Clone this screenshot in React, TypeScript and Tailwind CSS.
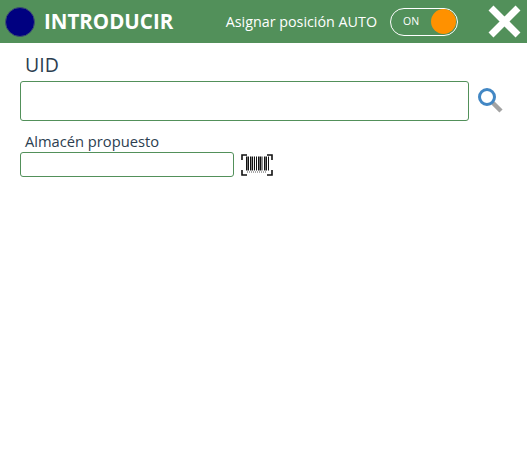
import { useState } from 'react';

const font = "font-['Open_Sans','Noto_Sans',sans-serif]";

const SearchIcon = () => (
    <svg width="28" height="28" viewBox="0 0 28 28" fill="none">
        <path d="M15.5 15.5L24 24" stroke="#a3a3a3" strokeWidth="4.5" />
        <circle cx="10" cy="10" r="7.5" stroke="#4287c4" strokeWidth="3" fill="#fff" />
    </svg>
);

const bars = [3, 5, 7, 8.5, 11, 13, 15, 17, 18.5, 21, 23, 25];

const BarcodeIcon = () => (
    <svg width="32" height="24" viewBox="0 0 32 24" fill="none">
        <path d="M1 7V2H6M26 2H31V7M1 17V22H6M26 22H31V17" stroke="#111" strokeWidth="1.6" />
        {bars.map((x, i) => (
            <rect key={x} x={x + 2} y="3.5" width={i % 3 === 0 ? 1.6 : 1} height="14" fill="#111" />
        ))}
        <path d="M6 19H26" stroke="#555" strokeWidth="1" strokeDasharray="1 1" />
    </svg>
);

export default function App() {
    const [auto, setAuto] = useState(true);

    return (
        <div className={`h-[457px] w-[527px] overflow-hidden bg-white ${font}`}>
            <header className="flex h-[43px] items-center bg-[#52905a] pl-[5px] pr-[6px] text-white">
                <div className="h-[30px] w-[30px] rounded-full border border-[#3d4f70] bg-[#000080]" />
                <h1 className="ml-[9px] text-[20.5px] font-bold leading-none">INTRODUCIR</h1>
                <span className="ml-auto text-[14.3px]">Asignar posición AUTO</span>
                <button
                    type="button"
                    onClick={() => setAuto(!auto)}
                    className="ml-[13px] flex h-[28px] w-[68px] items-center justify-between rounded-full border border-white pl-[12px] pr-[1px]"
                >
                    <span className="text-[10.5px] font-normal">{auto ? 'ON' : 'OFF'}</span>
                    <span className="h-[25px] w-[25px] rounded-full bg-[#ff9100]" />
                </button>
                <svg className="ml-[30px]" width="33" height="33" viewBox="0 0 33 33">
                    <path d="M3 3L30 30M30 3L3 30" stroke="#fff" strokeWidth="7" />
                </svg>
            </header>

            <main className="pl-5 text-[#2c3e50]">
                <label className="ml-[5px] mt-[9px] block text-[19.5px] leading-[26px]">UID</label>
                <div className="mt-[3px] flex items-center">
                    <input className="h-[40px] w-[449px] rounded-[3px] border border-[#52905a] outline-none" />
                    <span className="ml-2"><SearchIcon /></span>
                </div>
                <label className="ml-[5px] mt-[10px] block text-[14.7px] leading-[21px]">Almacén propuesto</label>
                <div className="flex items-center">
                    <input className="h-[25px] w-[214px] rounded-[3px] border border-[#52905a] outline-none" />
                    <span className="ml-[7px]"><BarcodeIcon /></span>
                </div>
            </main>
        </div>
    );
}
